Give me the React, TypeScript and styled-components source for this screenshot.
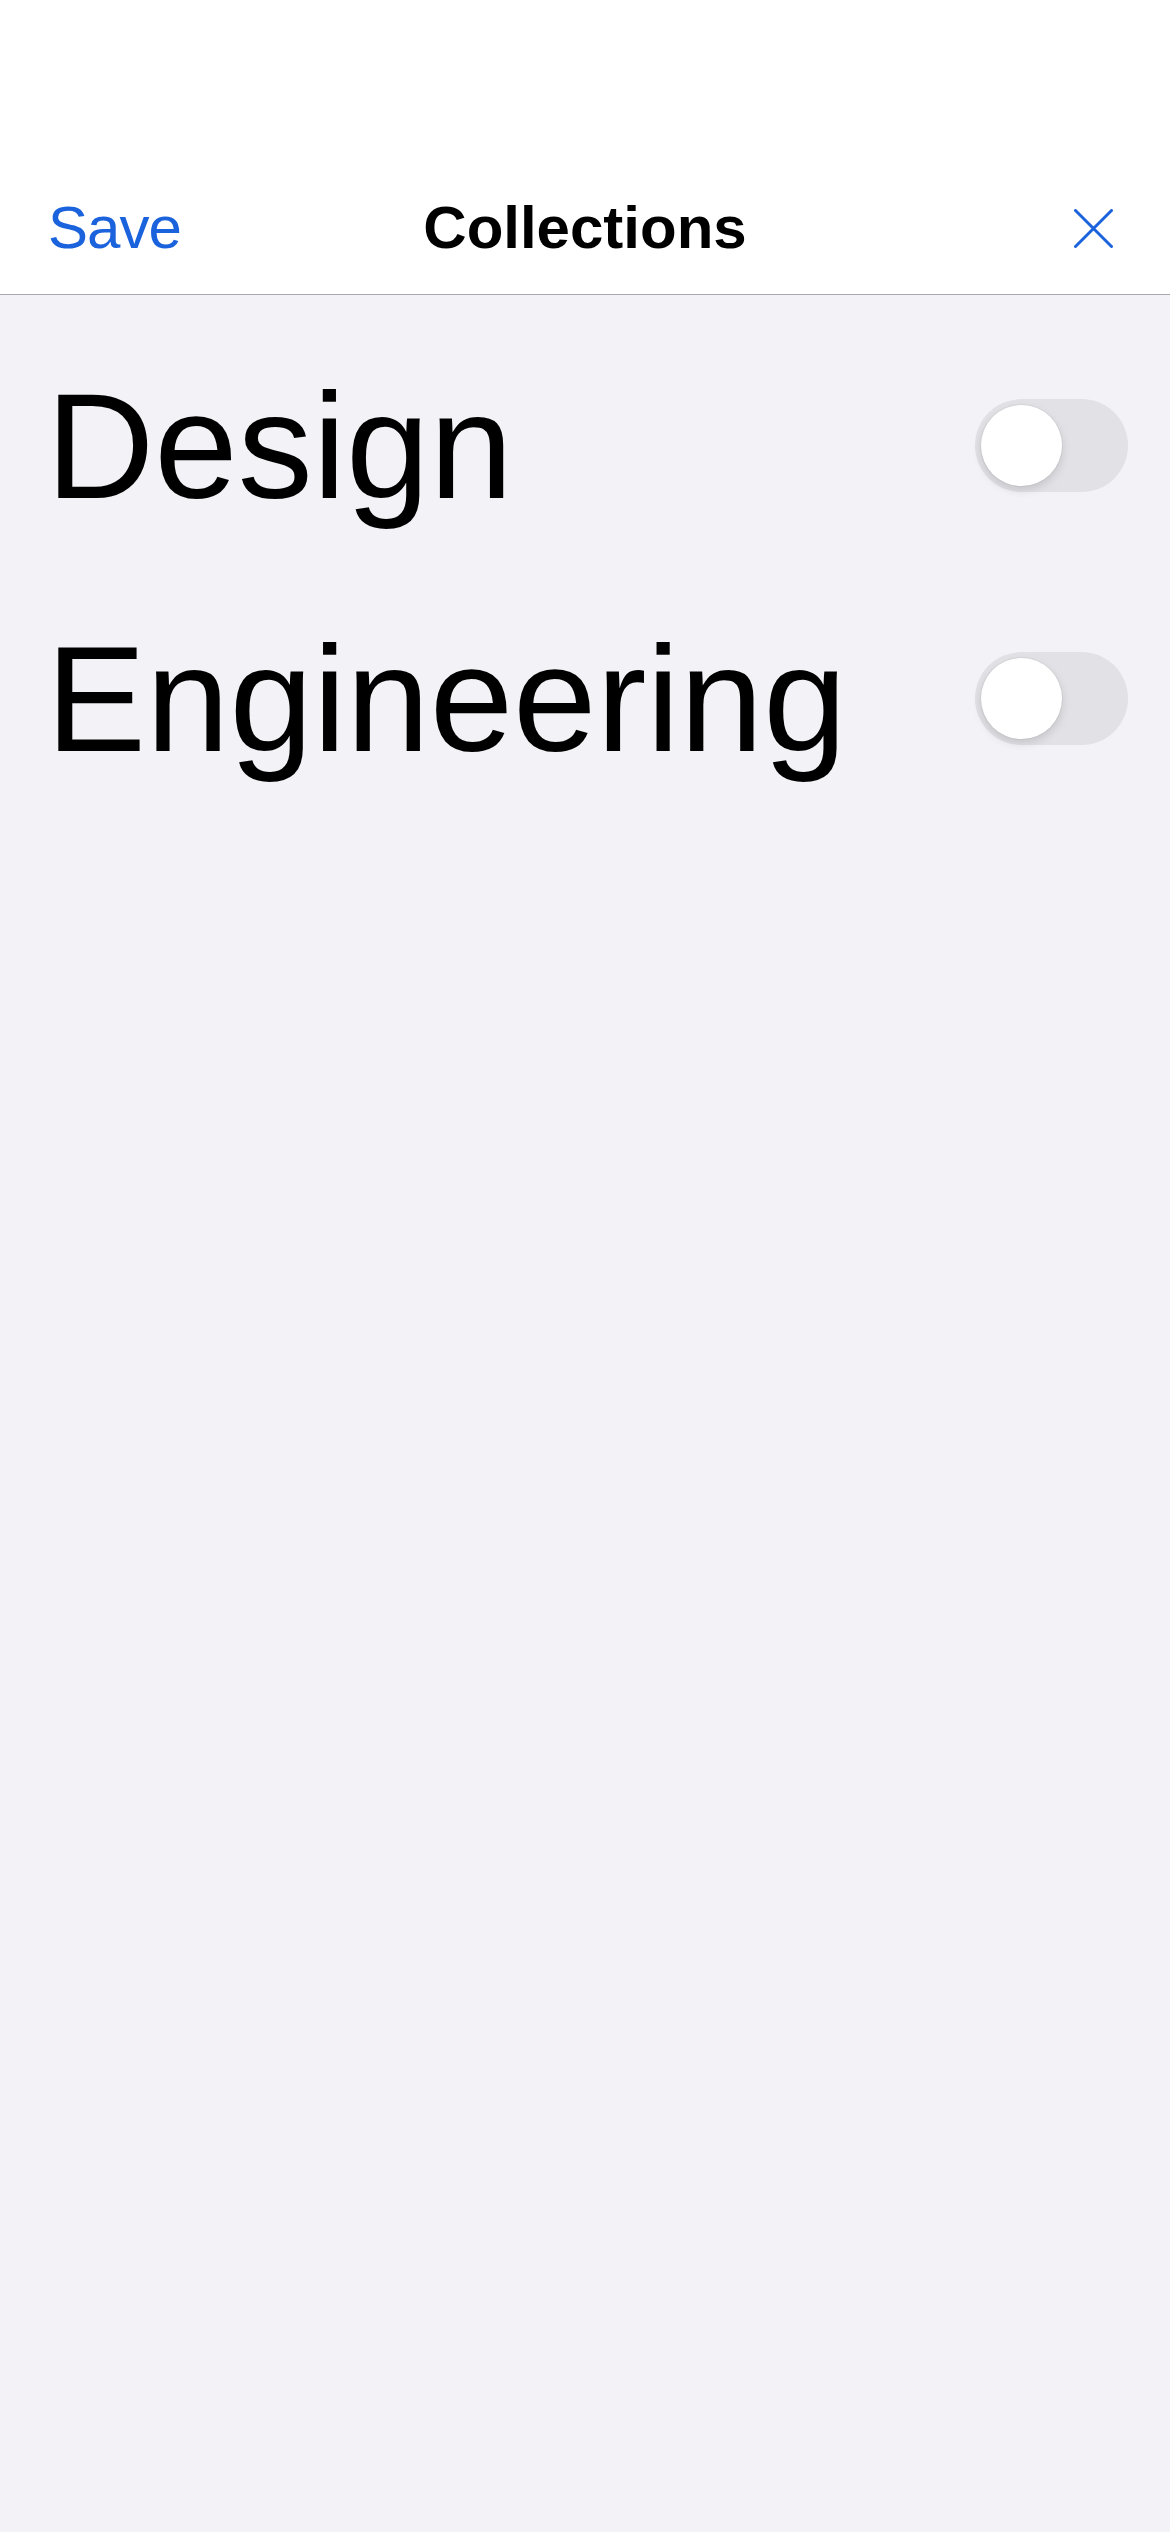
import React, { useState } from "react";
import styled, { createGlobalStyle } from "styled-components";

const GlobalStyle = createGlobalStyle`
  html, body {
    margin: 0;
    padding: 0;
    background: #f2f2f7;
  }
  body {
    font-family: "Liberation Sans", Arial, sans-serif;
    -webkit-font-smoothing: antialiased;
  }
  * { box-sizing: border-box; }
`;

const Page = styled.div`
  min-height: 2532px;
  background: #f2f2f7;
  display: flex;
  flex-direction: column;
`;

const NavBar = styled.header`
  height: 295px;
  padding: 162px 48px 0 48px;
  background: #ffffff;
  border-bottom: 1px solid #a9a9ad;
  display: grid;
  grid-template-columns: 1fr auto 1fr;
  align-items: center;
`;

const SaveButton = styled.button`
  justify-self: start;
  background: none;
  border: 0;
  padding: 0;
  font-family: "Liberation Sans", Arial, sans-serif;
  font-size: 60px;
  line-height: 1;
  letter-spacing: -1px;
  color: #1b63dc;
  cursor: pointer;
`;

const Title = styled.h1`
  margin: 0;
  font-family: "Liberation Sans", Arial, sans-serif;
  font-size: 60px;
  line-height: 1;
  font-weight: 700;
  letter-spacing: 0;
  color: #000000;
`;

const CloseButton = styled.button`
  justify-self: end;
  width: 39px;
  height: 39px;
  margin-right: 9px;
  padding: 0;
  border: 0;
  background: none;
  display: flex;
  cursor: pointer;
`;

const List = styled.main`
  display: flex;
  flex-direction: column;
  padding: 24px 42px 0 46px;
`;

const Row = styled.div`
  height: 253px;
  display: flex;
  align-items: center;
  justify-content: space-between;
`;

const Label = styled.span`
  font-family: "Liberation Sans", Arial, sans-serif;
  font-size: 150px;
  line-height: 150px;
  letter-spacing: 0;
  color: #000000;
`;

const Track = styled.button<{ $on: boolean }>`
  width: 153px;
  height: 93px;
  border: 0;
  border-radius: 46.5px;
  padding: 6px;
  display: flex;
  justify-content: ${(p) => (p.$on ? "flex-end" : "flex-start")};
  align-items: center;
  background: ${(p) => (p.$on ? "#34c759" : "#e1e1e6")};
  cursor: pointer;
  flex-shrink: 0;
`;

const Knob = styled.span`
  width: 81px;
  height: 81px;
  border-radius: 50%;
  background: #ffffff;
  box-shadow: 0 4px 10px rgba(0, 0, 0, 0.13), 0 0 0 1px rgba(0, 0, 0, 0.04);
`;

const Toggle: React.FC<{ on: boolean; onClick: () => void }> = ({ on, onClick }) => (
  <Track $on={on} onClick={onClick} aria-pressed={on}>
    <Knob />
  </Track>
);

export default function App() {
  const [items, setItems] = useState([
    { name: "Design", on: false },
    { name: "Engineering", on: false },
  ]);

  return (
    <Page>
      <GlobalStyle />
      <NavBar>
        <SaveButton>Save</SaveButton>
        <Title>Collections</Title>
        <CloseButton aria-label="Close">
          <svg width="39" height="39" viewBox="0 0 39 39" fill="none">
            <path
              d="M1.5 1.5 L37.5 37.5 M37.5 1.5 L1.5 37.5"
              stroke="#1b63dc"
              strokeWidth="3"
              strokeLinecap="round"
            />
          </svg>
        </CloseButton>
      </NavBar>
      <List>
        {items.map((item, i) => (
          <Row key={item.name}>
            <Label>{item.name}</Label>
            <Toggle
              on={item.on}
              onClick={() =>
                setItems((prev) =>
                  prev.map((it, j) => (j === i ? { ...it, on: !it.on } : it))
                )
              }
            />
          </Row>
        ))}
      </List>
    </Page>
  );
}
